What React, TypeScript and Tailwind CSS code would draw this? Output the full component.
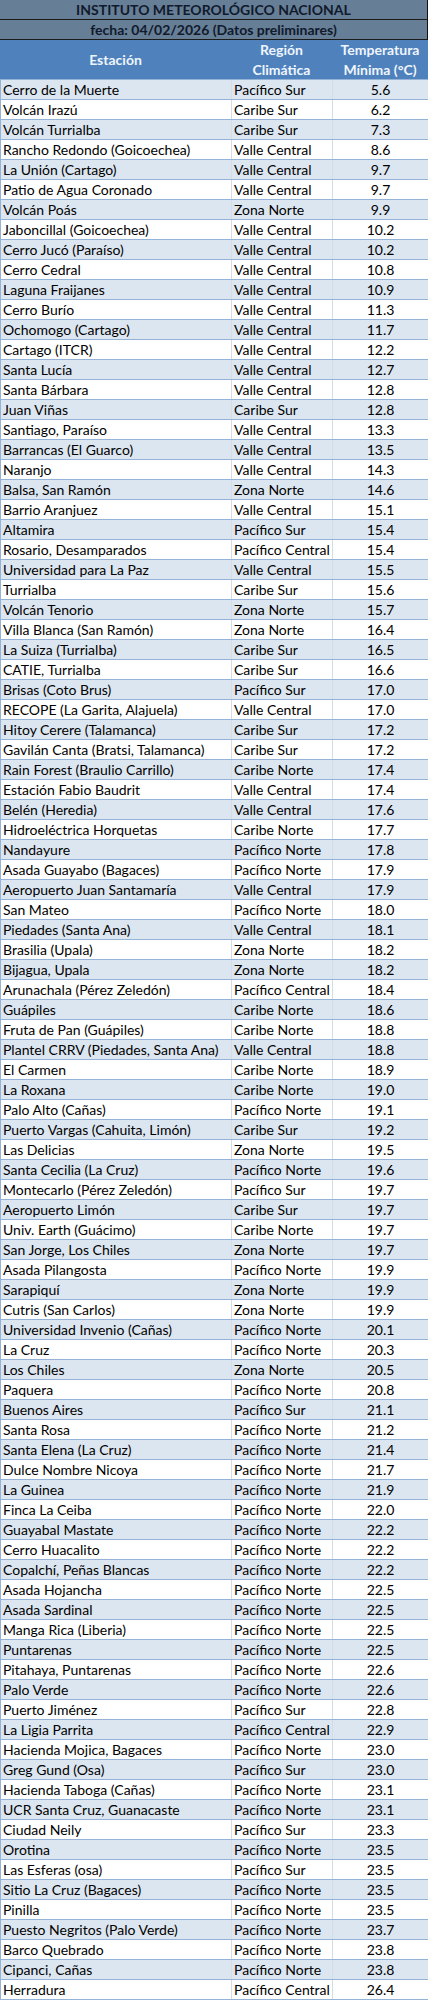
const raw = `Cerro de la Muerte|Pacífico Sur|5.6
Volcán Irazú|Caribe Sur|6.2
Volcán Turrialba|Caribe Sur|7.3
Rancho Redondo (Goicoechea)|Valle Central|8.6
La Unión (Cartago)|Valle Central|9.7
Patio de Agua Coronado|Valle Central|9.7
Volcán Poás|Zona Norte|9.9
Jaboncillal (Goicoechea)|Valle Central|10.2
Cerro Jucó (Paraíso)|Valle Central|10.2
Cerro Cedral|Valle Central|10.8
Laguna Fraijanes|Valle Central|10.9
Cerro Burío|Valle Central|11.3
Ochomogo (Cartago)|Valle Central|11.7
Cartago (ITCR)|Valle Central|12.2
Santa Lucía|Valle Central|12.7
Santa Bárbara|Valle Central|12.8
Juan Viñas|Caribe Sur|12.8
Santiago, Paraíso|Valle Central|13.3
Barrancas (El Guarco)|Valle Central|13.5
Naranjo|Valle Central|14.3
Balsa, San Ramón|Zona Norte|14.6
Barrio Aranjuez|Valle Central|15.1
Altamira|Pacífico Sur|15.4
Rosario, Desamparados|Pacífico Central|15.4
Universidad para La Paz|Valle Central|15.5
Turrialba|Caribe Sur|15.6
Volcán Tenorio|Zona Norte|15.7
Villa Blanca (San Ramón)|Zona Norte|16.4
La Suiza (Turrialba)|Caribe Sur|16.5
CATIE, Turrialba|Caribe Sur|16.6
Brisas (Coto Brus)|Pacífico Sur|17.0
RECOPE (La Garita, Alajuela)|Valle Central|17.0
Hitoy Cerere (Talamanca)|Caribe Sur|17.2
Gavilán Canta (Bratsi, Talamanca)|Caribe Sur|17.2
Rain Forest (Braulio Carrillo)|Caribe Norte|17.4
Estación Fabio Baudrit|Valle Central|17.4
Belén (Heredia)|Valle Central|17.6
Hidroeléctrica Horquetas|Caribe Norte|17.7
Nandayure|Pacífico Norte|17.8
Asada Guayabo (Bagaces)|Pacífico Norte|17.9
Aeropuerto Juan Santamaría|Valle Central|17.9
San Mateo|Pacífico Norte|18.0
Piedades (Santa Ana)|Valle Central|18.1
Brasilia (Upala)|Zona Norte|18.2
Bijagua, Upala|Zona Norte|18.2
Arunachala (Pérez Zeledón)|Pacífico Central|18.4
Guápiles|Caribe Norte|18.6
Fruta de Pan (Guápiles)|Caribe Norte|18.8
Plantel CRRV (Piedades, Santa Ana)|Valle Central|18.8
El Carmen|Caribe Norte|18.9
La Roxana|Caribe Norte|19.0
Palo Alto (Cañas)|Pacífico Norte|19.1
Puerto Vargas (Cahuita, Limón)|Caribe Sur|19.2
Las Delicias|Zona Norte|19.5
Santa Cecilia (La Cruz)|Pacífico Norte|19.6
Montecarlo (Pérez Zeledón)|Pacífico Sur|19.7
Aeropuerto Limón|Caribe Sur|19.7
Univ. Earth (Guácimo)|Caribe Norte|19.7
San Jorge, Los Chiles|Zona Norte|19.7
Asada Pilangosta|Pacífico Norte|19.9
Sarapiquí|Zona Norte|19.9
Cutris (San Carlos)|Zona Norte|19.9
Universidad Invenio (Cañas)|Pacífico Norte|20.1
La Cruz|Pacífico Norte|20.3
Los Chiles|Zona Norte|20.5
Paquera|Pacífico Norte|20.8
Buenos Aires|Pacífico Sur|21.1
Santa Rosa|Pacífico Norte|21.2
Santa Elena (La Cruz)|Pacífico Norte|21.4
Dulce Nombre Nicoya|Pacífico Norte|21.7
La Guinea|Pacífico Norte|21.9
Finca La Ceiba|Pacífico Norte|22.0
Guayabal Mastate|Pacífico Norte|22.2
Cerro Huacalito|Pacífico Norte|22.2
Copalchí, Peñas Blancas|Pacífico Norte|22.2
Asada Hojancha|Pacífico Norte|22.5
Asada Sardinal|Pacífico Norte|22.5
Manga Rica (Liberia)|Pacífico Norte|22.5
Puntarenas|Pacífico Norte|22.5
Pitahaya, Puntarenas|Pacífico Norte|22.6
Palo Verde|Pacífico Norte|22.6
Puerto Jiménez|Pacífico Sur|22.8
La Ligia Parrita|Pacífico Central|22.9
Hacienda Mojica, Bagaces|Pacífico Norte|23.0
Greg Gund (Osa)|Pacífico Sur|23.0
Hacienda Taboga (Cañas)|Pacífico Norte|23.1
UCR Santa Cruz, Guanacaste|Pacífico Norte|23.1
Ciudad Neily|Pacífico Sur|23.3
Orotina|Pacífico Norte|23.5
Las Esferas (osa)|Pacífico Sur|23.5
Sitio La Cruz (Bagaces)|Pacífico Norte|23.5
Pinilla|Pacífico Norte|23.5
Puesto Negritos (Palo Verde)|Pacífico Norte|23.7
Barco Quebrado|Pacífico Norte|23.8
Cipanci, Cañas|Pacífico Norte|23.8
Herradura|Pacífico Central|26.4`;

const stations = raw.split("\n").map((line) => {
  const [name, region, temp] = line.split("|");
  return { name, region, temp };
});

export default function App() {
  return (
    <div className="w-[428px] bg-white font-['Lato',_'Liberation_Sans',_sans-serif] text-[14px] text-black">
      {/* Title rows */}
      <div className="h-5 border-b border-r border-[#1b1b1b] border-r-[#111] bg-[#667e96] text-center font-bold leading-5 text-[#101a2c]">
        INSTITUTO METEOROLÓGICO NACIONAL
      </div>
      <div className="h-5 border-b border-r border-[#1b1b1b] border-r-[#111] bg-[#667e96] text-center font-bold leading-5 text-[#101a2c]">
        fecha: 04/02/2026 (Datos preliminares)
      </div>

      {/* Column headers */}
      <div className="grid h-10 grid-cols-[231px_101px_1fr] border-b border-[#95b3d7] bg-[#4f81bd] font-bold leading-5 text-[#eef5fc]">
        <div className="flex items-center justify-center">Estación</div>
        <div className="flex flex-col items-center justify-center text-center">
          <span>Región</span>
          <span>Climática</span>
        </div>
        <div className="flex flex-col items-center justify-center text-center">
          <span>Temperatura</span>
          <span>Mínima (°C)</span>
        </div>
      </div>

      {/* Data rows */}
      {stations.map((s, i) => (
        <div
          key={s.name}
          className={`grid h-5 grid-cols-[231px_101px_1fr] border-b border-l border-[#95b3d7] leading-[19px] ${
            i % 2 === 0 ? "bg-[#dce6f1]" : "bg-white"
          }`}
        >
          <div className="truncate border-r border-[#d3dbe6] pl-[2px]">{s.name}</div>
          <div className="truncate border-r border-[#d3dbe6] pl-[2px]">{s.region}</div>
          <div className="text-center">{s.temp}</div>
        </div>
      ))}
    </div>
  );
}
